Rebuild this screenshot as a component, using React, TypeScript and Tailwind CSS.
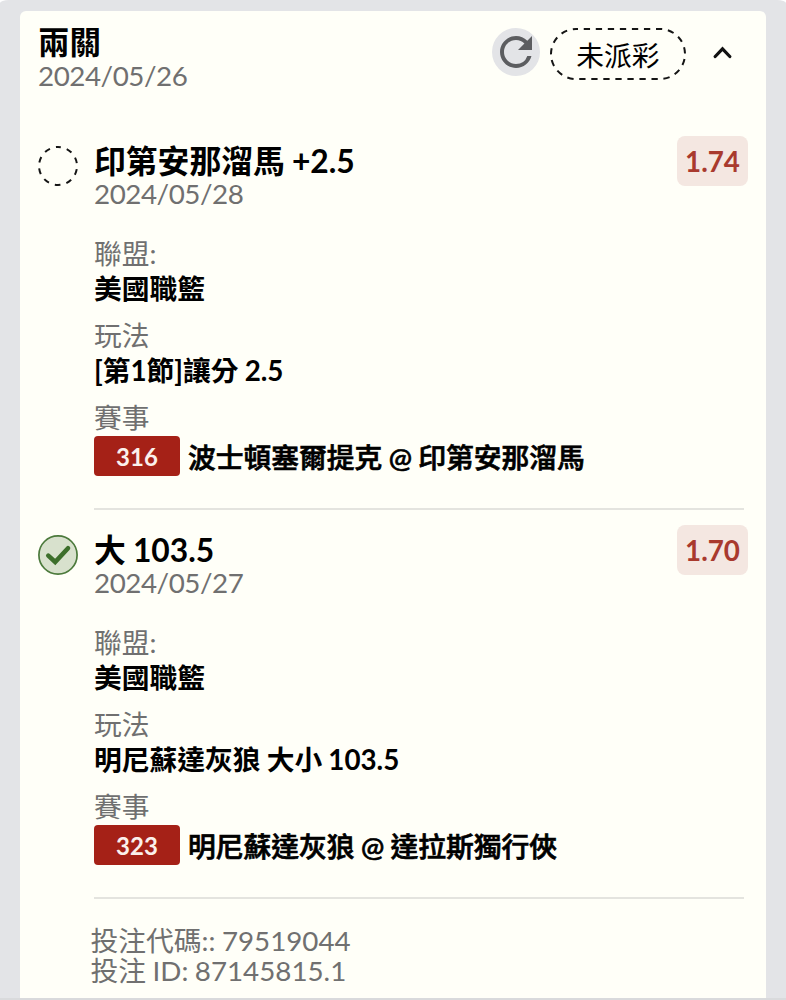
import { ReactNode } from "react";
import { MdRefresh } from "react-icons/md";

interface Leg {
  id: string;
  status: "pending" | "won";
  pick: string;
  date: string;
  odds: string;
  league: string;
  market: string;
  matchup: string;
}

const legs: Leg[] = [
  {
    id: "316",
    status: "pending",
    pick: "印第安那溜馬 +2.5",
    date: "2024/05/28",
    odds: "1.74",
    league: "美國職籃",
    market: "[第1節]讓分 2.5",
    matchup: "波士頓塞爾提克 @ 印第安那溜馬",
  },
  {
    id: "323",
    status: "won",
    pick: "大 103.5",
    date: "2024/05/27",
    odds: "1.70",
    league: "美國職籃",
    market: "明尼蘇達灰狼 大小 103.5",
    matchup: "明尼蘇達灰狼 @ 達拉斯獨行俠",
  },
];

function StatusIcon({ status }: { status: Leg["status"] }) {
  if (status === "won") {
    return (
      <svg className="mt-[11px] h-10 w-10" viewBox="0 0 40 40" fill="none">
        <circle cx="20" cy="20" r="19.1" fill="#d8e1cd" stroke="#4c7a3c" strokeWidth="1.7" />
        <path
          d="M10.3 20.6l6.9 6.4L30 13.2"
          stroke="#3d6f2b"
          strokeWidth="4.6"
          strokeLinecap="round"
          strokeLinejoin="miter"
        />
      </svg>
    );
  }
  return (
    <svg className="mt-[11px] h-10 w-10" viewBox="0 0 40 40" fill="none">
      <circle
        cx="20"
        cy="20"
        r="19"
        stroke="#151515"
        strokeWidth="2"
        strokeDasharray="5.8 6.138"
        strokeDashoffset="2.9"
        transform="rotate(-90 20 20)"
      />
    </svg>
  );
}

function Detail({ label, children }: { label: string; children: ReactNode }) {
  return (
    <div className="h-[82px]">
      <div className="h-[34px] leading-[34px] text-[#707070]">{label}</div>
      <div className="h-[36px] leading-[36px] font-bold">{children}</div>
    </div>
  );
}

function LegRow({ leg }: { leg: Leg }) {
  return (
    <div className="mb-[14px] flex h-[375px]">
      <div className="w-14 shrink-0">
        <StatusIcon status={leg.status} />
      </div>
      <div className="mr-1 flex-1 border-b-2 border-[#e4e4df]">
        <div className="flex justify-between">
          <div className="pt-[7px]">
            <h2 className="h-[37px] text-[31.8px] leading-[38px] font-bold">{leg.pick}</h2>
            <p className="h-[29px] leading-[30px] tracking-[-0.45px] text-[#707070]">{leg.date}</p>
          </div>
          <span className="-mr-1 mt-px flex h-[50px] w-[71px] items-center justify-center rounded-lg bg-[#f4e7e1] pt-0.5 font-bold text-[#a93a2e]">
            {leg.odds}
          </span>
        </div>
        <div className="mt-[29px]">
          <Detail label="聯盟:">{leg.league}</Detail>
          <Detail label="玩法">{leg.market}</Detail>
          <div>
            <div className="h-[35px] leading-[34px] text-[#707070]">賽事</div>
            <div className="flex h-10 items-center gap-2">
              <span className="flex h-10 w-[86px] items-center justify-center rounded-[4px] bg-[#a52117] pt-0.5 text-2xl font-bold text-[#fbf0ec]">
                {leg.id}
              </span>
              <span className="pt-1 leading-9 font-medium [-webkit-text-stroke:0.7px_black]">
                {leg.matchup}
              </span>
            </div>
          </div>
        </div>
      </div>
    </div>
  );
}

export default function App() {
  return (
    <div className="flex h-[1000px] w-[786px] flex-col overflow-hidden bg-white font-['Lato','Noto_Sans_CJK_TC',sans-serif] text-[27.75px] text-black [word-spacing:-0.6px]">
      <div className="h-[998px] rounded-[9px_9px_0_0/3px_3px_0_0] bg-[#e3e4e7] px-5 pt-[11px]">
        <div className="h-[987px] w-[746px] rounded-t-md bg-[#fffff8] pr-[18px] pl-[18px]">
          {/* Slip header */}
          <header className="flex h-[124px] justify-between">
            <div className="pt-[13px]">
              <h1 className="h-[37px] text-[31.5px] leading-[37px] font-bold">兩關</h1>
              <p className="h-[30px] leading-[30px] tracking-[-0.45px] text-[#707070]">2024/05/26</p>
            </div>
            <div className="flex items-start">
              <button className="mt-[17px] flex h-12 w-12 items-center justify-center rounded-full bg-[#e3e4e7]">
                <MdRefresh className="h-12 w-12 text-[#5c5d60]" />
              </button>
              <div className="relative mt-[17px] ml-2.5 flex h-[52px] w-[136px] items-center justify-center pt-[3px]">
                <svg className="absolute inset-0" width="136" height="52" fill="none">
                  <rect
                    x="1"
                    y="1"
                    width="134"
                    height="50"
                    rx="25"
                    stroke="#151515"
                    strokeWidth="2"
                    strokeDasharray="6.3 5.74"
                    strokeDashoffset="4.3"
                  />
                </svg>
                <span>未派彩</span>
              </div>
              <svg className="mt-[33px] mr-4 ml-[26px] h-5 w-5" viewBox="0 0 20 20" fill="none">
                <path d="M3.2 12.5L10.5 4.8l7.3 7.7" stroke="#111" strokeWidth="3.2" strokeLinecap="round" />
              </svg>
            </div>
          </header>

          {legs.map((leg) => (
            <LegRow key={leg.id} leg={leg} />
          ))}

          {/* Slip reference numbers */}
          <footer className="pt-[13px] pl-[52.5px] leading-[30px] text-[#707070]">
            <p>投注代碼:: 79519044</p>
            <p>投注 ID: 87145815.1</p>
          </footer>
        </div>
      </div>
      <div className="h-[2px] bg-[#d9dadc]" />
    </div>
  );
}
